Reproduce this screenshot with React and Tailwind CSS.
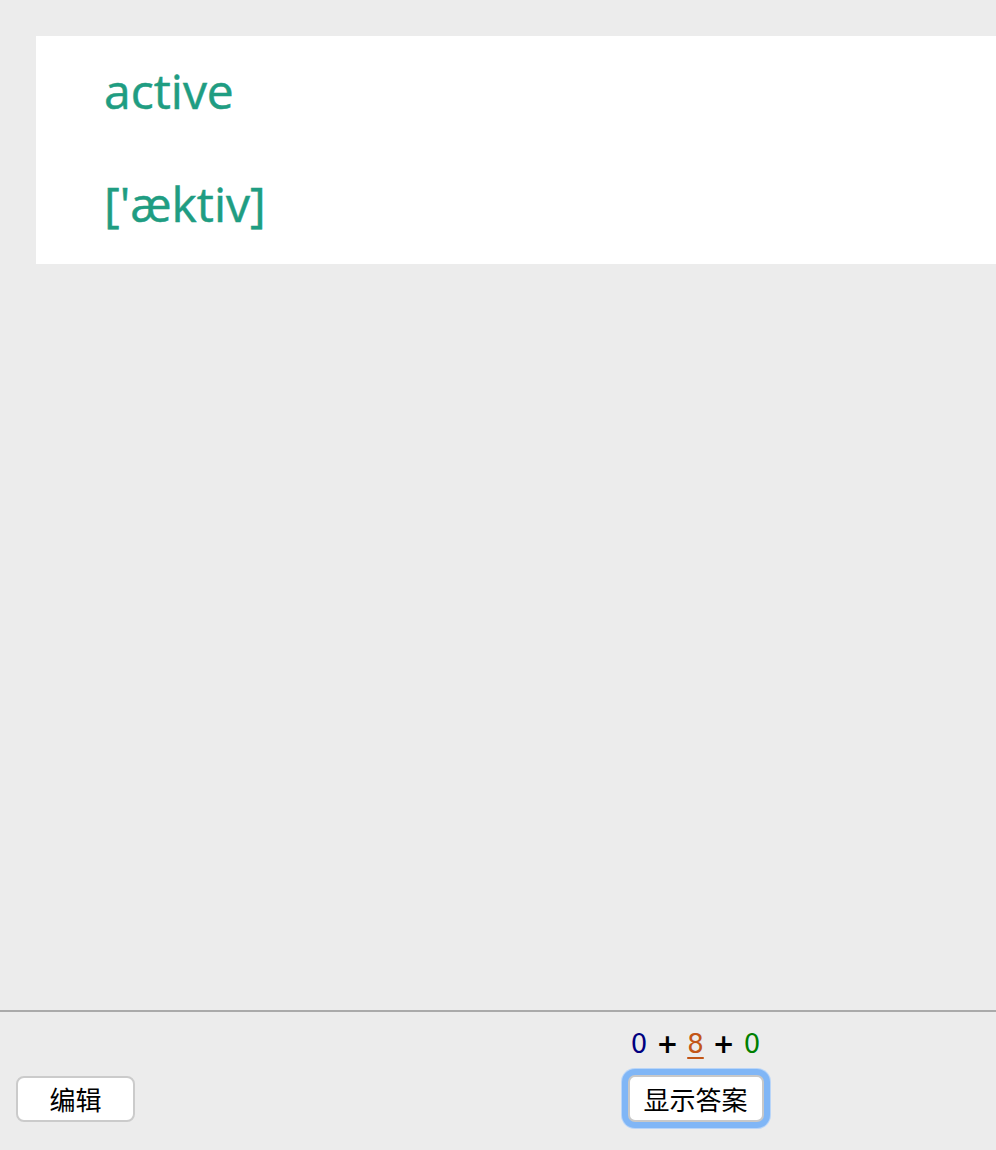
import { useState } from "react";

const Card = ({ word, phonetic }) => {
  return (
    <div className="mx-[36px] bg-white pl-[68px] pt-[23px] pb-[28px] text-[#1f9d82] font-['Open_Sans',sans-serif] text-[48px] leading-[64px] [-webkit-text-stroke:0.5px]">
      <div>{word}</div>
      <div className="mt-[49px]">{phonetic}</div>
    </div>
  );
};

const Counts = ({ fresh, learn, review }) => {
  return (
    <div className="font-['DejaVu_Sans',sans-serif] text-[26px] leading-[30px] text-black whitespace-pre">
      <span className="text-[#000080]">{fresh}</span>
      <span className="font-bold">{" + "}</span>
      <span className="text-[#c35617] underline underline-offset-[4px] decoration-2">{learn}</span>
      <span className="font-bold">{" + "}</span>
      <span className="text-[#008000]">{review}</span>
    </div>
  );
};

export default function App() {
  const [shown, setShown] = useState(false);

  return (
    <div className="h-[1150px] w-full overflow-hidden bg-[#ececec]">
      <div className="flex h-full w-[1391px] flex-col">
        <div className="flex-1 pt-[36px]">
          <Card word="active" phonetic="['æktiv]" />
        </div>

        <div className="flex h-[140px] items-end justify-between border-t-2 border-[#aaaaaa] px-[16px] pb-[28px] font-['Noto_Sans_CJK_SC',sans-serif] text-[26px] text-black">
          <div className="w-[240px]">
            <button className="flex h-[46px] w-[119px] items-center justify-center rounded-[8px] border-2 border-[#cbcbcb] bg-white leading-none">
              编辑
            </button>
          </div>

          <div className="flex flex-col items-center">
            <Counts fresh={0} learn={8} review={0} />
            <button
              onClick={() => setShown(!shown)}
              className="mt-[16px] flex h-[47px] w-[136px] items-center justify-center rounded-[7px] border-2 border-[#c8c8c8] bg-white leading-none shadow-[0_0_0_6px_#80b6f6,0_0_0_7px_#b9d5f8]"
            >
              {shown ? "显示问题" : "显示答案"}
            </button>
          </div>

          <div className="w-[240px]" />
        </div>
      </div>
    </div>
  );
}
